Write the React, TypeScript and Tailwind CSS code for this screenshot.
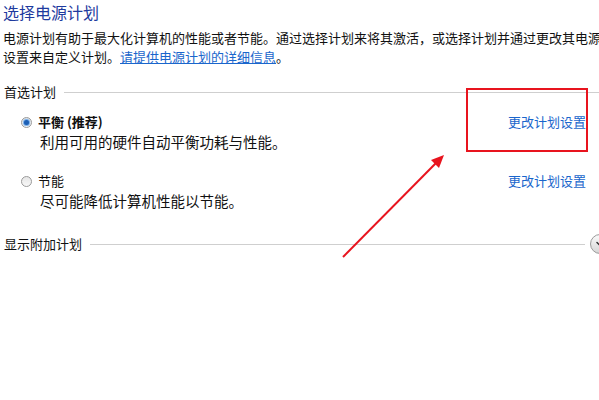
import { ChevronDown } from 'lucide-react';

const font = { fontFamily: '"Microsoft YaHei", "Noto Sans CJK SC", "Noto Sans", sans-serif' };

const Radio = ({ checked }: { checked?: boolean }) => (
  <span className="w-[11px] h-[11px] rounded-full border border-[#9a9a9a] bg-gradient-to-b from-[#e6e6e6] to-[#f8f8f8] flex items-center justify-center shrink-0">
    {checked && <span className="w-[5px] h-[5px] rounded-full bg-[#1c5fb5] shadow-[0_0_1px_1px_#6aa6e8]" />}
  </span>
);

const Plan = ({ name, desc, checked }: { name: string; desc: string; checked?: boolean }) => (
  <div className="flex items-start justify-between pl-[21px] pr-[13px]">
    <div>
      <div className="flex items-center gap-[6px] h-[20px]">
        <Radio checked={checked} />
        <span className={`text-[13px] text-[#111] ${checked ? 'font-bold' : ''}`}>{name}</span>
      </div>
      <div className="pl-[19px] text-[14.5px] text-[#111] leading-[20px]">{desc}</div>
    </div>
    <a className="text-[13px] text-[#1a66cc] leading-[20px] cursor-pointer">更改计划设置</a>
  </div>
);

const Section = ({ title }: { title: string }) => (
  <div className="flex items-center gap-[8px] pl-[4px] h-[20px]">
    <span className="text-[13px] text-[#111] whitespace-nowrap">{title}</span>
    <div className="flex-1 h-px bg-[#cfcfcf]" />
  </div>
);

export default function App() {
  return (
    <div className="relative w-[599px] h-[400px] bg-white overflow-hidden" style={font}>
      <div className="pl-[3px] text-[16px] leading-[24px] text-[#1e3a9e]">选择电源计划</div>
      <div className="mt-[4px] pl-[3px] text-[13px] leading-[19px] text-[#111] whitespace-nowrap overflow-hidden">
        <div>电源计划有助于最大化计算机的性能或者节能。通过选择计划来将其激活，或选择计划并通过更改其电源</div>
        <div>
          设置来自定义计划。<a className="text-[#1a66cc] underline cursor-pointer">请提供电源计划的详细信息</a>。
        </div>
      </div>
      <div className="mt-[16px]">
        <Section title="首选计划" />
      </div>
      <div className="mt-[10px]">
        <Plan checked name="平衡 (推荐)" desc="利用可用的硬件自动平衡功耗与性能。" />
      </div>
      <div className="mt-[19px]">
        <Plan name="节能" desc="尽可能降低计算机性能以节能。" />
      </div>
      <div className="mt-[23px] flex items-center">
        <div className="flex-1 pr-[5px]">
          <Section title="显示附加计划" />
        </div>
        <span className="w-[20px] h-[20px] mr-[-11px] rounded-full border border-[#9a9a9a] bg-gradient-to-b from-[#fafafa] to-[#d6d6d6] flex items-center justify-center">
          <ChevronDown className="w-[12px] h-[12px] text-[#333]" strokeWidth={3} />
        </span>
      </div>

      <div className="absolute left-[466px] top-[88px] w-[122px] h-[64px] border-2 border-[#e8141e]" />
      <svg className="absolute left-0 top-0 pointer-events-none" width="599" height="400">
        <line x1="343" y1="257" x2="437" y2="162" stroke="#e8141e" strokeWidth="2" />
        <polygon points="444,155 431,160 439,168" fill="#e8141e" />
      </svg>
    </div>
  );
}
